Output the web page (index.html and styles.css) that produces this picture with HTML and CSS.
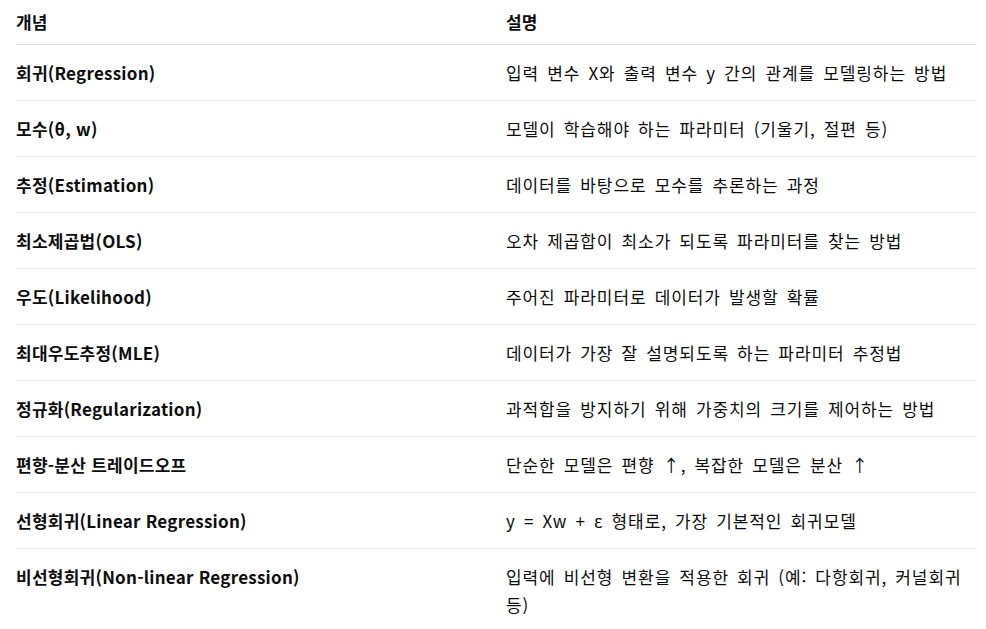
FILE: index.html
```html
<!DOCTYPE html>
<html lang="ko">
<head>
<meta charset="utf-8">
<link rel="stylesheet" href="styles.css">
</head>
<body>
<table class="concepts">
  <thead>
    <tr><th class="c1">개념</th><th class="c2">설명</th></tr>
  </thead>
  <tbody>
    <tr><td class="c1">회귀(Regression)</td><td class="c2">입력 변수 X와 출력 변수 y 간의 관계를 모델링하는 방법</td></tr>
    <tr><td class="c1">모수(θ, w)</td><td class="c2">모델이 학습해야 하는 파라미터 (기울기, 절편 등)</td></tr>
    <tr><td class="c1">추정(Estimation)</td><td class="c2">데이터를 바탕으로 모수를 추론하는 과정</td></tr>
    <tr><td class="c1">최소제곱법(OLS)</td><td class="c2">오차 제곱합이 최소가 되도록 파라미터를 찾는 방법</td></tr>
    <tr><td class="c1">우도(Likelihood)</td><td class="c2">주어진 파라미터로 데이터가 발생할 확률</td></tr>
    <tr><td class="c1">최대우도추정(MLE)</td><td class="c2">데이터가 가장 잘 설명되도록 하는 파라미터 추정법</td></tr>
    <tr><td class="c1">정규화(Regularization)</td><td class="c2">과적합을 방지하기 위해 가중치의 크기를 제어하는 방법</td></tr>
    <tr><td class="c1">편향-분산 트레이드오프</td><td class="c2">단순한 모델은 편향 ↑, 복잡한 모델은 분산 ↑</td></tr>
    <tr><td class="c1">선형회귀(Linear Regression)</td><td class="c2">y = Xw + ε 형태로, 가장 기본적인 회귀모델</td></tr>
    <tr><td class="c1">비선형회귀(Non-linear Regression)</td><td class="c2">입력에 비선형 변환을 적용한 회귀 (예: 다항회귀, 커널회귀 등)</td></tr>
  </tbody>
</table>
</body>
</html>
```

FILE: styles.css
```css
html, body {
  margin: 0;
  padding: 0;
  background: #ffffff;
}
body {
  padding: 0 10px 0 16px;
  font-family: "Noto Sans CJK KR", "Noto Sans", sans-serif;
  font-size: 17px;
  line-height: 28px;
  color: #0d0d0d;
}
.concepts {
  width: 960px;
  border-collapse: collapse;
  table-layout: fixed;
}
.concepts th, .concepts td {
  text-align: left;
  padding: 0;
  vertical-align: top;
}
.concepts th {
  font-weight: 700;
  padding-top: 8px;
  padding-bottom: 8px;
  border-bottom: 1px solid #dcdcdc;
}
.concepts td {
  padding-top: 14px;
  padding-bottom: 13px;
  border-bottom: 1px solid #f0f0f0;
}
.concepts tbody tr:last-child td {
  border-bottom: none;
}
.concepts td.c1 {
  font-weight: 700;
  letter-spacing: 0.25px;
}
.concepts td.c2 {
  letter-spacing: 0.9px;
  word-spacing: 2.5px;
}
.c1 { width: 490px; }
.c2 { width: 470px; }
```
